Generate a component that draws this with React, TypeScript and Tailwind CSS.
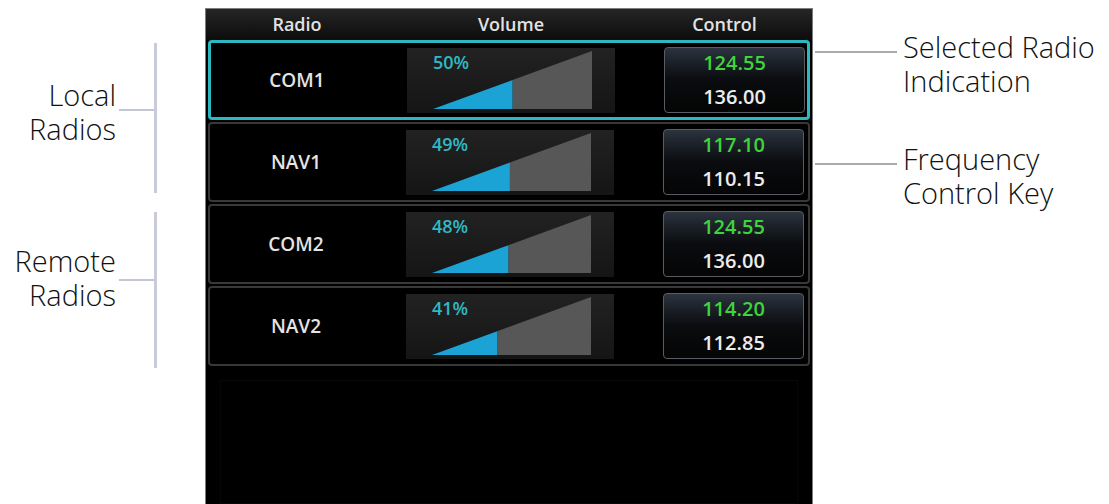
import React from 'react'

type Radio = {
  name: string
  pct: number
  active: string
  standby: string
  selected?: boolean
}

const radios: Radio[] = [
  { name: 'COM1', pct: 50, active: '124.55', standby: '136.00', selected: true },
  { name: 'NAV1', pct: 49, active: '117.10', standby: '110.15' },
  { name: 'COM2', pct: 48, active: '124.55', standby: '136.00' },
  { name: 'NAV2', pct: 41, active: '114.20', standby: '112.85' },
]

const screenFont = { fontFamily: '"Open Sans", "Noto Sans", sans-serif' }
const noteFont = { fontFamily: '"Open Sans", "Noto Sans", sans-serif' }

function VolumeWedge({ pct }: { pct: number }) {
  // wedge: bottom-left (26,61) -> bottom-right (185,61) -> top-right (185,3)
  const x0 = 26
  const x1 = 185
  const yb = 61
  const yt = 3
  const xb = x0 + ((x1 - x0) * pct) / 100
  const yMid = yb - ((yb - yt) * (xb - x0)) / (x1 - x0)
  return (
    <svg className="absolute inset-0" width="208" height="65" viewBox="0 0 208 65">
      <polygon points={`${xb},${yb} ${x1},${yb} ${x1},${yt} ${xb},${yMid}`} fill="#575757" />
      <polygon points={`${x0},${yb} ${xb},${yb} ${xb},${yMid}`} fill="#1ba3d6" />
    </svg>
  )
}

function RadioRow({ radio }: { radio: Radio }) {
  return (
    <div
      className={`h-[80px] flex items-center rounded-[4px] ${
        radio.selected ? 'border-[3px] border-[#2bb8c1]' : 'border-2 border-[#383838]'
      }`}
    >
      <div className="w-[172px] text-center text-[19px] font-semibold text-[#e4e4e4]">{radio.name}</div>
      <div className="relative ml-[24px] w-[208px] h-[65px] bg-gradient-to-b from-[#222222] to-[#151515]">
        <VolumeWedge pct={radio.pct} />
        <div className="absolute left-[26px] top-[1px] text-[18px] font-semibold text-[#2fb9c4]">{radio.pct}%</div>
      </div>
      <div className="ml-[49px] w-[141px] h-[66px] rounded-[4px] border-[1.5px] border-[#585d64] bg-gradient-to-b from-[#2c3440] via-[#0a0c0f] to-[#050505] flex flex-col items-center justify-center leading-[34px] text-[20px] font-semibold">
        <span className="text-[#3fd33c]">{radio.active}</span>
        <span className="text-[#ececec]">{radio.standby}</span>
      </div>
    </div>
  )
}

function Bracket({ lines, height, tickOffset, textOffset }: { lines: string[]; height: number; tickOffset: string; textOffset: string }) {
  return (
    <div className="flex items-center justify-end pr-[48px]" style={{ height }}>
      <div className={`text-right text-[29px] font-light leading-[34px] text-[#111111] ${textOffset}`} style={noteFont}>
        {lines.map(l => (
          <div key={l}>{l}</div>
        ))}
      </div>
      <div className={`ml-[3px] w-[35px] h-[2px] bg-[#c3c7d3] ${tickOffset}`} />
      <div className="w-[3px] h-full bg-[#c9ccd8]" />
    </div>
  )
}

function Callout({ lines, className }: { lines: string[]; className: string }) {
  return (
    <div className={`flex items-start ${className}`}>
      <div className="mt-[21px] ml-[2px] w-[82px] h-[2px] bg-[#a9abaf]" />
      <div className="ml-[6px] text-[29px] font-light leading-[34px] text-[#111111] whitespace-nowrap" style={noteFont}>
        {lines.map(l => (
          <div key={l}>{l}</div>
        ))}
      </div>
    </div>
  )
}

export default function App() {
  return (
    <div className="w-[1109px] h-[504px] bg-white flex overflow-hidden">
      <div className="w-[205px] pt-[43px] flex flex-col">
        <Bracket lines={['Local', 'Radios']} height={150} tickOffset="mb-[16px]" textOffset="mb-[12px]" />
        <div className="h-[19px]" />
        <Bracket lines={['Remote', 'Radios']} height={156} tickOffset="mb-[20px]" textOffset="mb-[24px]" />
      </div>

      <div className="w-[608px] mt-[8px] bg-black border-l border-t border-r border-[#7c7c7c] flex flex-col" style={screenFont}>
        <div className="h-[31px] flex items-center bg-gradient-to-b from-[#262626] to-[#0c0c0c] text-[18px] font-semibold text-[#e2e2e2] px-[5px]">
          <div className="w-[172px] text-center">Radio</div>
          <div className="ml-[24px] w-[208px] text-center">Volume</div>
          <div className="ml-[39px] w-[141px] text-center">Control</div>
        </div>
        <div className="px-[2px] flex flex-col gap-[2px]">
          {radios.map(r => (
            <RadioRow key={r.name} radio={r} />
          ))}
        </div>
        <div className="flex-1 mx-[14px] mt-[14px] border border-[#070707]" />
      </div>

      <div className="flex-1 pt-[30px] flex flex-col">
        <Callout lines={['Selected Radio', 'Indication']} className="" />
        <Callout lines={['Frequency', 'Control Key']} className="mt-[44px]" />
      </div>
    </div>
  )
}
